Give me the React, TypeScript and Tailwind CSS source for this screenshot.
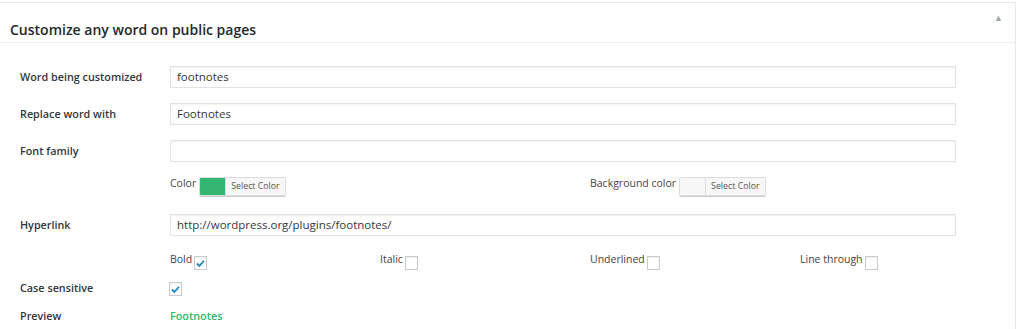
import React from "react";

function Check(props: { checked?: boolean }) {
  return (
    <span className="inline-flex shrink-0 w-[13px] h-[14px] border border-[#c8cbcf] bg-white shadow-[inset_0_1px_2px_rgba(0,0,0,0.07)] items-center justify-center">
      {props.checked && (
        <svg width="11" height="11" viewBox="0 0 20 20">
          <path d="M3.5 10 L8 14.5 L16.5 5" fill="none" stroke="#1e8cbe" strokeWidth="3.4" />
        </svg>
      )}
    </span>
  );
}

function ColorPick(props: { label: string; color: string }) {
  return (
    <div className="flex items-start">
      <span className="text-[10.5px] leading-[14px] text-[#444] mr-[3px] -mt-[1px]">{props.label}</span>
      <div className="flex h-[19px] border border-[#dcdcdc] rounded-[2px] overflow-hidden shadow-[0_1px_0_#ccc]">
        <div className="w-[25px] h-full" style={{ background: props.color }} />
        <div className="px-[5px] bg-[#f7f7f7] border-l border-[#ddd] text-[8.8px] text-[#555] flex items-center">Select Color</div>
      </div>
    </div>
  );
}

function InputRow(props: { label: string; value: string }) {
  return (
    <div className="flex items-center h-[22px]">
      <div className="w-[150px] text-[10.8px] font-semibold text-[#32373c]">{props.label}</div>
      <div className="w-[786px] h-[22px] border border-[#e2e2e2] shadow-[inset_0_1px_2px_rgba(0,0,0,0.05)] px-[6px] flex items-center text-[11.5px] text-[#32373c]">
        {props.value}
      </div>
    </div>
  );
}

export default function App() {
  const styles = [
    { label: "Bold", checked: true },
    { label: "Italic", checked: false },
    { label: "Underlined", checked: false },
    { label: "Line through", checked: false },
  ];

  return (
    <div className="w-[1028px] h-[329px] bg-white overflow-hidden font-['Open_Sans',sans-serif]">
      <div className="mt-[2px] w-[1016px] border-t border-r border-[#e9e9e9]">
        <div className="relative h-[40px] border-b border-[#eeeeee] px-[10px] pt-[17px]">
          <h2 className="text-[14px] font-semibold text-[#23282d] leading-[20px]">Customize any word on public pages</h2>
          <span className="absolute right-[12px] top-[8px] text-[9px] text-[#a0a5aa]">▲</span>
        </div>
        <div className="pl-[20px] pt-[23px] pb-[20px]">
          <InputRow label="Word being customized" value="footnotes" />
          <div className="h-[15px]" />
          <InputRow label="Replace word with" value="Footnotes" />
          <div className="h-[15px]" />
          <InputRow label="Font family" value="" />
          <div className="h-[15px]" />
          <div className="flex pl-[150px] h-[19px]">
            <div className="w-[420px]"><ColorPick label="Color" color="#33b672" /></div>
            <div className="w-[420px]"><ColorPick label="Background color" color="#f7f7f7" /></div>
          </div>
          <div className="h-[18px]" />
          <InputRow label="Hyperlink" value="http://wordpress.org/plugins/footnotes/" />
          <div className="h-[20px]" />
          <div className="flex pl-[150px] h-[14px] items-start">
            {styles.map((s, i) => (
              <div key={i} className="w-[210px] flex items-start">
                <span className="text-[10.5px] leading-[13px] text-[#444] mr-[2px] -mt-[3px]">{s.label}</span>
                <Check checked={s.checked} />
              </div>
            ))}
          </div>
          <div className="h-[12px]" />
          <div className="flex items-center h-[14px]">
            <div className="w-[149px] text-[10.8px] font-semibold text-[#32373c] -mt-[2px]">Case sensitive</div>
            <Check checked />
          </div>
          <div className="h-[12px]" />
          <div className="flex items-center h-[16px]">
            <div className="w-[150px] text-[10.8px] font-semibold text-[#32373c]">Preview</div>
            <div className="text-[10.8px] font-semibold text-[#2db96a]">Footnotes</div>
          </div>
        </div>
      </div>
    </div>
  );
}
